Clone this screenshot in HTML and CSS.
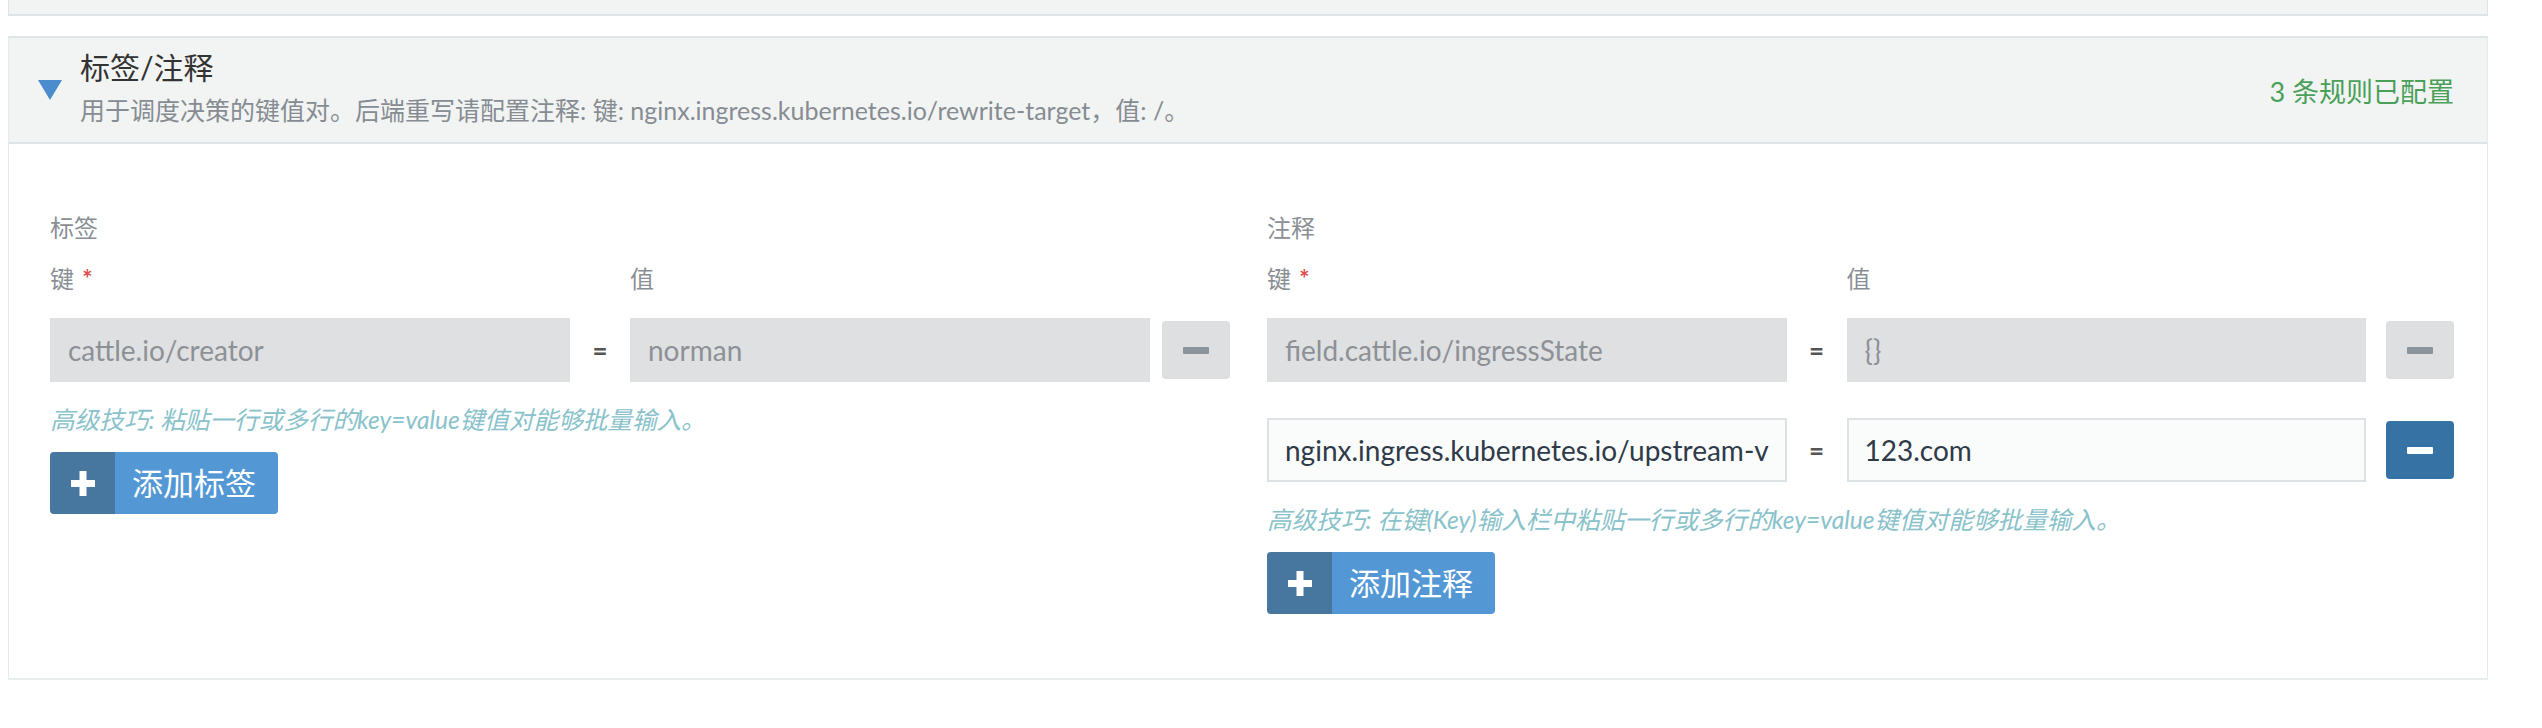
FILE: index.html
```html
<!DOCTYPE html>
<html lang="zh-CN">
<head>
<meta charset="utf-8">
<title>标签/注释</title>
<link rel="stylesheet" href="styles.css">
</head>
<body>
<div class="page">
  <div class="panel-prev"></div>
  <section class="accordion">
    <header class="acc-head">
      <span class="caret"></span>
      <div class="acc-titles">
        <h2 class="acc-title">标签/注释</h2>
        <p class="acc-sub">用于调度决策的键值对。后端重写请配置注释: 键: nginx.ingress.kubernetes.io/rewrite-target，值: /。</p>
      </div>
      <div class="acc-status">3 条规则已配置</div>
    </header>
    <div class="acc-body">
      <div class="kv-col kv-left">
        <div class="section-label">标签</div>
        <div class="kv-head"><span>键 <span class="req">*</span></span><span></span><span>值</span><span></span></div>
        <div class="kv-row">
          <input class="field disabled" value="cattle.io/creator" readonly>
          <span class="eq">=</span>
          <input class="field disabled" value="norman" readonly>
          <button class="btn-remove" type="button" aria-label="删除"><span class="bar"></span></button>
        </div>
        <p class="hint">高级技巧: 粘贴一行或多行的key=value键值对能够批量输入。</p>
        <button class="btn-add" type="button">
          <span class="icon"><svg width="24" height="25" viewBox="0 0 24 25"><rect x="0" y="9" width="24" height="7" fill="#fff"/><rect x="8.5" y="0" width="7" height="25" fill="#fff"/></svg></span>
          <span class="label">添加标签</span>
        </button>
      </div>
      <div class="kv-col kv-right">
        <div class="section-label">注释</div>
        <div class="kv-head"><span>键 <span class="req">*</span></span><span></span><span>值</span><span></span></div>
        <div class="kv-row">
          <input class="field disabled" value="field.cattle.io/ingressState" readonly>
          <span class="eq">=</span>
          <input class="field disabled" value="{}" readonly>
          <button class="btn-remove" type="button" aria-label="删除"><span class="bar"></span></button>
        </div>
        <div class="kv-row">
          <input class="field" value="nginx.ingress.kubernetes.io/upstream-vhost">
          <span class="eq">=</span>
          <input class="field" value="123.com">
          <button class="btn-remove primary" type="button" aria-label="删除"><span class="bar"></span></button>
        </div>
        <p class="hint">高级技巧: 在键(Key)输入栏中粘贴一行或多行的key=value键值对能够批量输入。</p>
        <button class="btn-add" type="button">
          <span class="icon"><svg width="24" height="25" viewBox="0 0 24 25"><rect x="0" y="9" width="24" height="7" fill="#fff"/><rect x="8.5" y="0" width="7" height="25" fill="#fff"/></svg></span>
          <span class="label">添加注释</span>
        </button>
      </div>
    </div>
  </section>
</div>
</body>
</html>
```

FILE: styles.css
```css
html, body {
  margin: 0;
  padding: 0;
  background: #fff;
}

body {
  font-family: Lato, "Noto Sans CJK SC", "Noto Sans", sans-serif;
  color: #333;
}

.page {
  padding: 0 54px 0 8px;
}

.panel-prev {
  height: 14px;
  background: #f2f4f3;
  border-left: 1px solid #dde3e6;
  border-right: 1px solid #dde3e6;
  border-bottom: 2px solid #dde3e6;
  margin-bottom: 20px;
}

.accordion {
  border-left: 1px solid #e6eaea;
  border-right: 1px solid #e6eaea;
  border-top: 2px solid #dde3e6;
  border-bottom: 2px solid #e8eded;
}

.acc-head {
  display: flex;
  align-items: center;
  height: 104px;
  background: #f2f4f3;
  border-bottom: 2px solid #dde3e6;
  padding: 0 33px 0 29px;
}

.caret {
  width: 0;
  height: 0;
  border-left: 12px solid transparent;
  border-right: 12px solid transparent;
  border-top: 20px solid #4a8ccc;
  margin-right: 18px;
  flex: none;
}

.acc-titles {
  align-self: flex-start;
  padding-top: 7px;
  flex: 1;
  min-width: 0;
}

.acc-title {
  margin: 0;
  font-size: 30px;
  line-height: 44px;
  font-weight: 400;
  color: #333;
}

.acc-sub {
  margin: 0;
  font-size: 25px;
  line-height: 42px;
  color: #868c92;
  white-space: nowrap;
}

.acc-status {
  font-size: 27px;
  color: #4a9f5a;
  white-space: nowrap;
}

.acc-body {
  display: grid;
  grid-template-columns: 1180px 1fr;
  column-gap: 37px;
  padding: 69px 33px 64px 41px;
}

.kv-left {
  --btn-area: 80px;
}

.kv-right {
  --btn-area: 88px;
}

.section-label {
  font-size: 24px;
  line-height: 30px;
  color: #8a8f95;
  margin-bottom: 21px;
}

.kv-head {
  display: grid;
  grid-template-columns: 1fr 60px 1fr var(--btn-area);
  font-size: 24px;
  line-height: 30px;
  color: #8a8f95;
  margin-bottom: 24px;
}

.req {
  color: #e04b4b;
  font-size: 24px;
  font-weight: 700;
  vertical-align: baseline;
  margin-left: 2px;
}

.kv-row {
  display: grid;
  grid-template-columns: 1fr 60px 1fr var(--btn-area);
  align-items: center;
  height: 64px;
}

.kv-row + .kv-row {
  margin-top: 36px;
}

.field {
  width: 100%;
  height: 64px;
  box-sizing: border-box;
  border: 2px solid #dde2e5;
  background: #fafbfb;
  padding: 0 16px;
  margin: 0;
  font-family: Lato, "Noto Sans CJK SC", sans-serif;
  font-size: 28px;
  color: #2f3a48;
  outline: none;
  border-radius: 0;
}

.field.disabled {
  background: #dfe0e2;
  border-color: #dfe0e2;
  color: #8d9196;
}

.eq {
  text-align: center;
  font-size: 26px;
  font-weight: 700;
  color: #555;
}

.btn-remove {
  justify-self: end;
  width: 68px;
  height: 58px;
  border: 0;
  padding: 0;
  border-radius: 4px;
  background: #dedfe1;
  display: flex;
  align-items: center;
  justify-content: center;
}

.btn-remove .bar {
  display: block;
  width: 26px;
  height: 7px;
  border-radius: 1px;
  background: #8a949c;
}

.btn-remove.primary {
  background: #3672a4;
}

.btn-remove.primary .bar {
  background: #fff;
}

.hint {
  margin: 22px 0 0;
  font-size: 24.6px;
  line-height: 32px;
  font-style: italic;
  color: #89c2ca;
}

.btn-add {
  display: inline-flex;
  height: 62px;
  margin-top: 16px;
  padding: 0;
  border: 0;
  border-radius: 4px;
  overflow: hidden;
  font: inherit;
  vertical-align: top;
}

.btn-add .icon {
  width: 65px;
  background: #47779f;
  display: flex;
  align-items: center;
  justify-content: center;
}

.btn-add .label {
  background: #5398d5;
  color: #fff;
  font-size: 31px;
  line-height: 62px;
  padding: 0 22px 0 17px;
}
```
